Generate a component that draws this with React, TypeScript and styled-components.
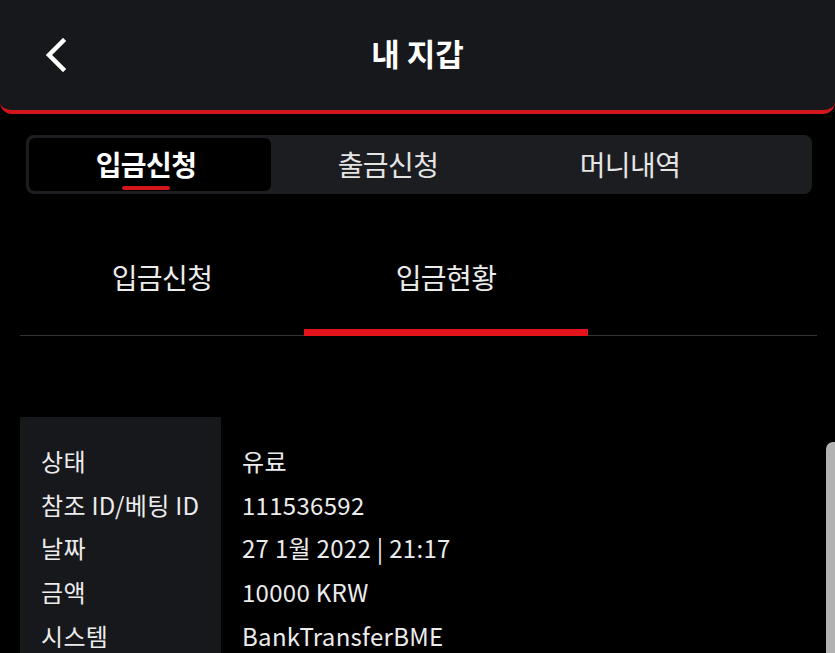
import React from "react";
import styled, { createGlobalStyle } from "styled-components";

const Global = createGlobalStyle`
  html, body { margin: 0; padding: 0; background: #000; }
  body { font-family: "Noto Sans CJK KR", "Noto Sans", sans-serif; color: #ececec; overflow: hidden; }
  * { box-sizing: border-box; }
`;

const Page = styled.div`
  width: 835px;
  height: 653px;
  background: #000;
  overflow: hidden;
  position: relative;
`;

const Header = styled.header`
  height: 114px;
  background: #17181c;
  border-bottom: 4px solid #d3161c;
  border-radius: 0 0 12px 12px;
  display: grid;
  grid-template-columns: 110px 1fr 110px;
  align-items: center;
`;

const BackButton = styled.button`
  background: none;
  border: none;
  padding: 0 0 0 44px;
  display: flex;
  align-items: center;
  height: 100%;
  cursor: pointer;
`;

const Title = styled.h1`
  margin: 0;
  text-align: center;
  font-size: 31px;
  font-weight: 700;
  color: #fff;
  letter-spacing: 0;
  padding-bottom: 6px;
`;

const TabBar = styled.nav`
  margin: 21px 23px 0 26px;
  height: 59px;
  padding: 3px;
  background: #1c1d21;
  border-radius: 8px;
  display: grid;
  grid-template-columns: repeat(3, 242px);
`;

const Tab = styled.div<{ $active?: boolean }>`
  position: relative;
  display: flex;
  align-items: center;
  justify-content: center;
  border-radius: 6px;
  background: ${(p) => (p.$active ? "#000" : "transparent")};
  font-size: 28px;
  letter-spacing: -0.6px;
  font-weight: ${(p) => (p.$active ? 700 : 400)};
  color: ${(p) => (p.$active ? "#fff" : "#e4e4e4")};
  padding: 0 8px 2px 0;
`;

const TabMark = styled.span`
  position: absolute;
  left: calc(50% - 4px);
  bottom: 1px;
  width: 48px;
  height: 4px;
  margin-left: -24px;
  border-radius: 2px;
  background: #d3161c;
`;

const SubTabs = styled.div`
  margin: 53px 18px 0 20px;
  height: 89px;
  border-bottom: 1px solid #333438;
  display: grid;
  grid-template-columns: 284px 284px 1fr;
`;

const SubTab = styled.div<{ $active?: boolean }>`
  position: relative;
  display: flex;
  align-items: flex-start;
  justify-content: center;
  padding-top: 10px;
  font-size: 28px;
  letter-spacing: -0.6px;
  color: #ececec;
  &::after {
    content: "";
    display: ${(p) => (p.$active ? "block" : "none")};
    position: absolute;
    left: 0;
    right: 0;
    bottom: -1px;
    height: 7px;
    background: #e3131b;
  }
`;

const Table = styled.div`
  margin: 81px 0 0 20px;
  display: grid;
  grid-template-columns: 201px 1fr;
`;

const LabelCol = styled.div`
  background: #17181c;
  padding: 22px 0 0 21px;
`;

const ValueCol = styled.div`
  padding: 22px 0 0 21px;
`;

const Cell = styled.div`
  height: 43.6px;
  display: flex;
  align-items: center;
  font-size: 24px;
  color: #ececec;
  white-space: nowrap;
  letter-spacing: 0.3px;
`;

const Scrollbar = styled.div`
  position: absolute;
  right: 0;
  top: 442px;
  width: 9px;
  bottom: 0;
  background: #b2b2b2;
  border-radius: 7px 0 0 0;
`;

const rows: [string, string][] = [
  ["상태", "유료"],
  ["참조 ID/베팅 ID", "111536592"],
  ["날짜", "27 1월 2022 | 21:17"],
  ["금액", "10000 KRW"],
  ["시스템", "BankTransferBME"],
];

export default function App() {
  return (
    <Page>
      <Global />
      <Header>
        <BackButton aria-label="back">
          <svg width="24" height="34" viewBox="0 0 24 34">
            <path d="M19 3 L5 17 L19 31" fill="none" stroke="#fff" strokeWidth="4.5" strokeLinecap="square" />
          </svg>
        </BackButton>
        <Title>내 지갑</Title>
        <div />
      </Header>
      <TabBar>
        <Tab $active>
          입금신청
          <TabMark />
        </Tab>
        <Tab>출금신청</Tab>
        <Tab>머니내역</Tab>
      </TabBar>
      <SubTabs>
        <SubTab>입금신청</SubTab>
        <SubTab $active>입금현황</SubTab>
        <div />
      </SubTabs>
      <Table>
        <LabelCol>
          {rows.map(([l]) => (
            <Cell key={l}>{l}</Cell>
          ))}
        </LabelCol>
        <ValueCol>
          {rows.map(([l, v]) => (
            <Cell key={l}>{v}</Cell>
          ))}
        </ValueCol>
      </Table>
      <Scrollbar />
    </Page>
  );
}
